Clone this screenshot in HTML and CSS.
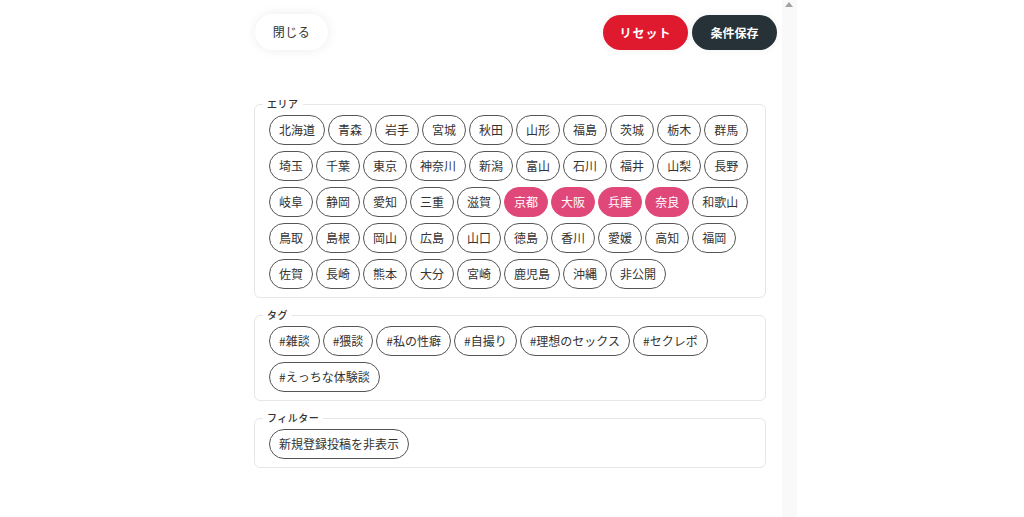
FILE: index.html
```html
<!DOCTYPE html>
<html lang="ja">
<head>
<meta charset="utf-8">
<title>検索条件</title>
<link rel="stylesheet" href="styles.css">
</head>
<body>
<div class="sheet">
  <div class="main">
    <div class="header">
      <button class="btn btn-close">閉じる</button>
      <div class="actions">
        <button class="btn btn-reset">リセット</button>
        <button class="btn btn-save">条件保存</button>
      </div>
    </div>

    <fieldset class="group group-area">
      <legend>エリア</legend>
      <div class="chips">
        <span class="chip">北海道</span><span class="chip">青森</span><span class="chip">岩手</span><span class="chip">宮城</span><span class="chip">秋田</span><span class="chip">山形</span><span class="chip">福島</span><span class="chip">茨城</span><span class="chip">栃木</span><span class="chip">群馬</span>
        <span class="chip">埼玉</span><span class="chip">千葉</span><span class="chip">東京</span><span class="chip">神奈川</span><span class="chip">新潟</span><span class="chip">富山</span><span class="chip">石川</span><span class="chip">福井</span><span class="chip">山梨</span><span class="chip">長野</span>
        <span class="chip">岐阜</span><span class="chip">静岡</span><span class="chip">愛知</span><span class="chip">三重</span><span class="chip">滋賀</span><span class="chip on">京都</span><span class="chip on">大阪</span><span class="chip on">兵庫</span><span class="chip on">奈良</span><span class="chip">和歌山</span>
        <span class="chip">鳥取</span><span class="chip">島根</span><span class="chip">岡山</span><span class="chip">広島</span><span class="chip">山口</span><span class="chip">徳島</span><span class="chip">香川</span><span class="chip">愛媛</span><span class="chip">高知</span><span class="chip">福岡</span>
        <span class="chip">佐賀</span><span class="chip">長崎</span><span class="chip">熊本</span><span class="chip">大分</span><span class="chip">宮崎</span><span class="chip">鹿児島</span><span class="chip">沖縄</span><span class="chip">非公開</span>
      </div>
    </fieldset>

    <fieldset class="group">
      <legend>タグ</legend>
      <div class="chips">
        <span class="chip">#雑談</span><span class="chip">#猥談</span><span class="chip">#私の性癖</span><span class="chip">#自撮り</span><span class="chip">#理想のセックス</span><span class="chip">#セクレポ</span><span class="chip">#えっちな体験談</span>
      </div>
    </fieldset>

    <fieldset class="group">
      <legend>フィルター</legend>
      <div class="chips">
        <span class="chip">新規登録投稿を非表示</span>
      </div>
    </fieldset>
  </div>
  <div class="scrollbar"><span class="arrow"></span></div>
</div>
</body>
</html>
```

FILE: styles.css
```css
html, body {
  margin: 0;
  padding: 0;
  background: #ffffff;
}

body {
  font-family: "Noto Sans CJK JP", "Noto Sans", sans-serif;
  color: #333333;
}

.sheet {
  display: flex;
  width: 557px;
  height: 517px;
  margin-left: 240px;
}

.main {
  width: 542px;
}

.header {
  display: flex;
  justify-content: space-between;
  align-items: flex-start;
  padding: 14px 5px 0 15px;
  height: 36px;
  margin-bottom: 48px;
}

.actions {
  display: flex;
  gap: 4px;
  padding-top: 1px;
}

.btn {
  height: 36px;
  border: none;
  border-radius: 18px;
  font-family: inherit;
  font-size: 12px;
  line-height: 36px;
  padding: 0;
  cursor: pointer;
}

.btn-close {
  width: 73px;
  background: #ffffff;
  color: #333333;
  letter-spacing: 0.5px;
  box-shadow: 0 0 12px rgba(0, 0, 0, 0.08);
}

.btn-reset {
  width: 85px;
  height: 35px;
  background: #df1a2e;
  color: #ffffff;
  font-weight: 700;
  letter-spacing: 1px;
  box-shadow: 0 0 10px rgba(0, 0, 0, 0.06);
}

.btn-save {
  width: 85px;
  height: 35px;
  background: #263238;
  color: #ffffff;
  font-weight: 700;
  box-shadow: 0 0 10px rgba(0, 0, 0, 0.06);
}

.group {
  margin: 0 16px 11px 14px;
  padding: 5px 14px 8px 14px;
  border: 1px solid #e6e6e6;
  border-radius: 6px;
  min-width: 0;
}

.group legend {
  padding: 0 4px;
  margin-left: -6px;
  font-size: 10px;
  line-height: 12px;
  font-weight: 500;
  color: #333333;
  letter-spacing: 0.5px;
}

.chips {
  display: flex;
  flex-wrap: wrap;
  gap: 6px 3px;
}

.chip {
  display: inline-block;
  height: 28px;
  line-height: 28px;
  padding: 0 9px;
  border: 1px solid #555555;
  border-radius: 15px;
  font-size: 12px;
  color: #333333;
  white-space: nowrap;
}

.chip.on {
  background: #e1487a;
  border-color: #e1487a;
  color: #ffffff;
}

.scrollbar {
  position: relative;
  width: 15px;
  height: 517px;
  background: #f9f9f9;
}

.arrow {
  position: absolute;
  top: 2px;
  left: 3px;
  width: 0;
  height: 0;
  border-left: 4px solid transparent;
  border-right: 4px solid transparent;
  border-bottom: 5px solid #a3a3a3;
}
```
